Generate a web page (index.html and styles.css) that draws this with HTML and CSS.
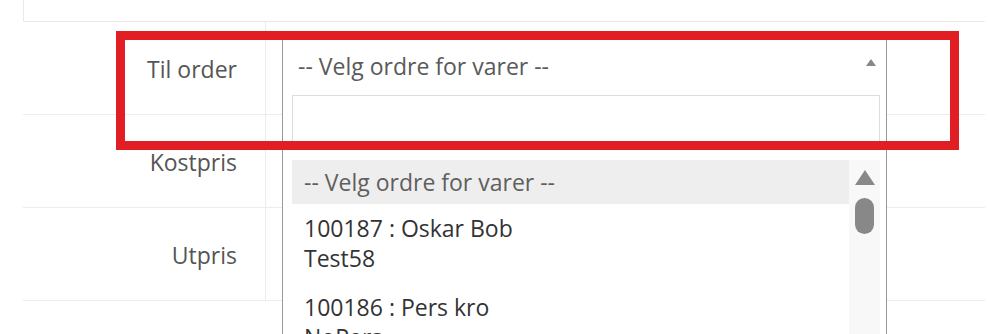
FILE: index.html
```html
<html lang="en">
<head>
    <title>Vare</title>
    <meta charset="utf-8">
    <link rel="stylesheet" href="styles.css">
</head>

<body>
    <div id='page'>
        <div class='top-panel'></div>
        <div class='form'>
            <div class='form-row'>
                <div class='label'>Til order</div>
                <div class='value'>
                    <div class='select open'>
                        <div class='selection'>
                            <span class='selection-text'>-- Velg ordre for varer --</span>
                            <span class='arrow'></span>
                        </div>
                        <div class='dropdown'>
                            <div class='search'>
                                <input class='search-field' type='text'>
                            </div>
                            <div class='results'>
                                <ul class='options'>
                                    <li class='option highlighted'>-- Velg ordre for varer --</li>
                                    <li class='option'>100187 : Oskar Bob<br>Test58</li>
                                    <li class='option'>100186 : Pers kro<br>NoPers</li>
                                </ul>
                                <div class='scrollbar'>
                                    <div class='scroll-up'></div>
                                    <div class='scroll-thumb'></div>
                                </div>
                            </div>
                        </div>
                    </div>
                </div>
            </div>
            <div class='form-row'>
                <div class='label'>Kostpris</div>
                <div class='value'></div>
            </div>
            <div class='form-row'>
                <div class='label'>Utpris</div>
                <div class='value'></div>
            </div>
        </div>
        <!-- markering rundt feltet -->
        <div class='annotation'></div>
    </div>
</body>

</html>
```

FILE: styles.css
```css
html, body {
    margin: 0px;
    padding: 0px;
    background-color: white;
    overflow: hidden;
}

body {
    font-family: "Open Sans", "Liberation Sans", sans-serif;
    font-size: 23px;
}

#page {
    position: relative;
    height: 334px;
    padding: 0 3px 0 23px;
}

div.top-panel {
    height: 21px;
    border-left: 1px solid #eaeaea;
    border-bottom: 1px solid #eaeaea;
}

div.form-row {
    display: grid;
    grid-template-columns: 243px 1fr;
    height: 93px;
    box-sizing: border-box;
    border-bottom: 1px solid #ececec;
}

div.label {
    border-right: 1px solid #ececec;
    text-align: right;
    padding: 32px 28px 0 0;
    line-height: 30px;
    color: #555;
}

div.value {
    padding: 16px 0 0 16px;
}

div.select {
    position: relative;
    width: 605px;
    box-sizing: border-box;
}

div.selection {
    display: flex;
    height: 50px;
    border: 1px solid #999;
    border-bottom: none;
    padding: 12px 10px 0 15px;
    box-sizing: border-box;
    line-height: 30px;
    color: #5a5a5a;
}

span.selection-text {
    flex: 1;
}

span.arrow {
    width: 0;
    height: 0;
    margin-top: 8px;
    border-style: solid;
    border-width: 0 5.5px 7px 5.5px;
    border-color: transparent transparent #888 transparent;
}

div.dropdown {
    position: absolute;
    top: 50px;
    left: 0;
    right: 0;
    height: 300px;
    border: 1px solid #999;
    border-top: none;
    background-color: white;
    padding: 7px 6px 0 9px;
}

div.search input.search-field {
    display: block;
    width: 100%;
    height: 50px;
    box-sizing: border-box;
    border: 1px solid #ddd;
    outline: none;
    margin: 0;
}

div.results {
    display: flex;
    margin-top: 15px;
}

ul.options {
    flex: 1;
    list-style: none;
    margin: 0;
    padding: 0;
}

li.option {
    padding: 9px 12px 10px 12px;
    line-height: 30px;
    color: #333;
}

li.option.highlighted {
    padding: 7px 12px;
    background-color: #eee;
    color: #5f5f5f;
}

div.scrollbar {
    width: 31px;
    height: 200px;
    background-color: #f8f8f8;
    padding: 10px 0 0 6px;
    box-sizing: border-box;
}

div.scroll-up {
    width: 0;
    height: 0;
    border-style: solid;
    border-width: 0 10px 15px 10px;
    border-color: transparent transparent #888 transparent;
}

div.scroll-thumb {
    width: 19px;
    height: 36px;
    margin-top: 13px;
    border-radius: 10px;
    background-color: #888;
}

div.annotation {
    position: absolute;
    left: 116px;
    top: 31px;
    width: 843px;
    height: 119px;
    box-sizing: border-box;
    border: 9px solid #e21e25;
}
```
